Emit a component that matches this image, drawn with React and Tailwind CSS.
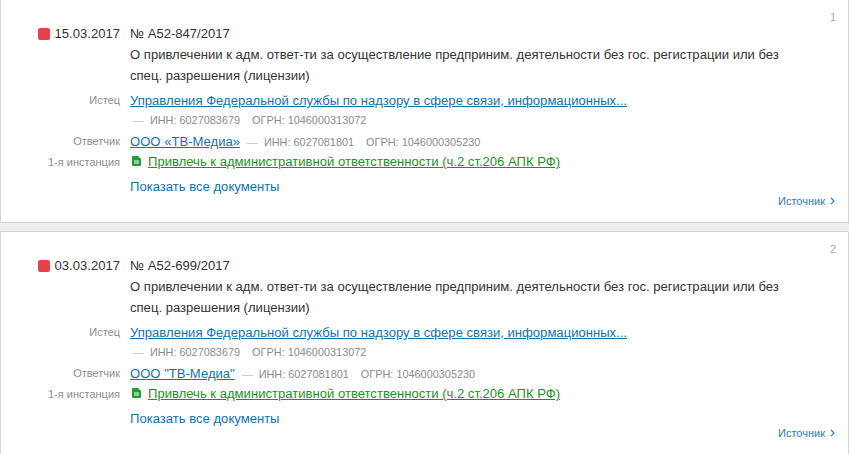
const plaintiff = 'Управления Федеральной службы по надзору в сфере связи, информационных...';
const subject = 'О привлечении к адм. ответ-ти за осуществление предприним. деятельности без гос. регистрации или без спец. разрешения (лицензии)';
const ruling = 'Привлечь к административной ответственности (ч.2 ст.206 АПК РФ)';

const cases = [
  { n: 1, date: '15.03.2017', num: '№ А52-847/2017', defendant: 'ООО «ТВ-Медиа»', top: 'mt-[-1px]' },
  { n: 2, date: '03.03.2017', num: '№ А52-699/2017', defendant: 'ООО "ТВ-Медиа"', top: 'mt-2' },
];

function Row({ label, children, className = 'leading-[21px]' }) {
  return (
    <div className={`flex ${className}`}>
      <div className="w-[119px] shrink-0 pt-px text-right text-[11px] text-[#8c8c8c]">{label}</div>
      <div className="ml-[10px] min-w-0 flex-1">{children}</div>
    </div>
  );
}

function Requisites({ inn, ogrn }) {
  return (
    <span className="text-[10.9px] text-[#8c8c8c]">
      <span className="text-[#c4c4c4] mr-[6px]">—</span>
      ИНН: {inn}<span className="ml-[12px]">ОГРН: {ogrn}</span>
    </span>
  );
}

function CaseCard({ item }) {
  return (
    <div className={`${item.top} h-[224px] border border-[#d4d4d4] bg-white pt-[8px] pr-[13px] flex flex-col`}>
      <div className="text-right text-[11px] leading-[14px] text-[#aaaaaa] mt-[2px] mb-[-2px] mr-[-1px]">{item.n}</div>
      <Row
        className="mt-px leading-[21px]"
        label={
          <span className="flex items-center justify-end gap-[5px] mt-[-1px] text-[13.08px] text-[#333333]">
            <span className="w-3 h-3 rounded-[2px] bg-[#e5424d]" />
            {item.date}
          </span>
        }
      >
        <div className="text-[13.08px] text-[#333333]">{item.num}</div>
      </Row>
      <Row>
        <p className="text-[13.08px] text-[#333333] max-w-[660px]">{subject}</p>
      </Row>
      <Row label="Истец" className="mt-[3px] leading-[21px]">
        <a className="text-[13.08px] text-[#0f73ad] underline">{plaintiff}</a>
      </Row>
      <Row className="leading-[20px] mt-[-2px]">
        <span className="ml-[3px]"><Requisites inn="6027083679" ogrn="1046000313072" /></span>
      </Row>
      <Row label="Ответчик" className="h-[21px] leading-[21px]">
        <a className="text-[13.08px] text-[#0f73ad] underline">{item.defendant}</a>
        <span className="ml-[7px]"><Requisites inn="6027081801" ogrn="1046000305230" /></span>
      </Row>
      <Row label="1-я инстанция">
        <div className="flex items-center gap-[7px]">
          <svg width="9" height="10" viewBox="0 0 9 10" className="shrink-0 mb-[2px] ml-[2px]">
            <path d="M1 0h5l3 3v6a1 1 0 0 1-1 1H1a1 1 0 0 1-1-1V1a1 1 0 0 1 1-1z" fill="#259a32" />
            <path d="M2 5h5M2 7h5" stroke="#fff" strokeWidth="1" />
          </svg>
          <a className="text-[13.08px] text-[#1f8f2a] underline">{ruling}</a>
        </div>
      </Row>
      <Row className="mt-[2px] leading-[21px]">
        <a className="text-[13.08px] text-[#0f73ad]">Показать все документы</a>
      </Row>
      <div className="flex justify-end items-center gap-[5px] text-[11px] leading-[14px] text-[#2a7ab0] mt-[-3px]">
        Источник
        <svg width="5" height="8" viewBox="0 0 5 8" fill="none" stroke="#2a7ab0" strokeWidth="1.2">
          <path d="M1 .8 4 4 1 7.2" />
        </svg>
      </div>
    </div>
  );
}

export default function App() {
  return (
    <div className="w-[849px] h-[454px] overflow-hidden bg-[#eeeeee] font-['Liberation_Sans',sans-serif]">
      {cases.map((item) => (
        <CaseCard key={item.n} item={item} />
      ))}
    </div>
  );
}
